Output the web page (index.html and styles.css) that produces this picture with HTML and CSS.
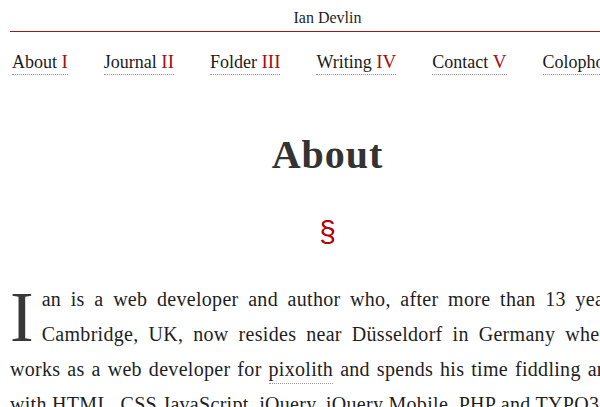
FILE: index.html
```html
<!DOCTYPE html>
<html lang="en">
<head>
<meta charset="utf-8">
<title>About – Ian Devlin</title>
<link rel="stylesheet" href="styles.css">
</head>
<body>
<div class="page">
  <header class="site-header">
    <a class="site-title" href="#">Ian Devlin</a>
  </header>
  <nav class="main-nav">
    <ul>
      <li><a href="#">About <span class="num">I</span></a></li>
      <li><a href="#">Journal <span class="num">II</span></a></li>
      <li><a href="#">Folder <span class="num">III</span></a></li>
      <li><a href="#">Writing <span class="num">IV</span></a></li>
      <li><a href="#">Contact <span class="num">V</span></a></li>
      <li><a href="#">Colophon <span class="num">VI</span></a></li>
    </ul>
  </nav>
  <main class="content">
    <h1 class="title">About</h1>
    <div class="section-mark">§</div>
    <p class="intro"><span class="dropcap">I</span><span class="line">an is a web developer and author who, after more than 13 years in</span><span class="line">Cambridge, UK, now resides near Düsseldorf in Germany where he</span><span class="line">works as a web developer for <a class="inline-link" href="#">pixolith</a> and spends his time fiddling around</span>with HTML, CSS JavaScript, jQuery, jQuery Mobile, PHP and TYPO3.</p>
  </main>
</div>
</body>
</html>
```

FILE: styles.css
```css
html {
  overflow: hidden;
}

body {
  margin: 0;
  background: #fff;
  color: #1e1e1e;
  font-family: "Liberation Serif", "Times New Roman", serif;
}

a {
  color: inherit;
  text-decoration: none;
}

.page {
  width: 635px;
  margin-left: 10px;
}

.site-header {
  padding: 8px 0 3px;
  text-align: center;
  border-bottom: 1px solid #9b1a1a;
  font-size: 16px;
  line-height: 20px;
}

.main-nav ul {
  list-style: none;
  margin: 18px 0 0;
  padding: 0 0 0 2px;
  display: flex;
  gap: 36px;
  white-space: nowrap;
}

.main-nav a {
  display: block;
  font-size: 18px;
  line-height: 24px;
  border-bottom: 1px dotted #9a9a9a;
  color: #1a1a1a;
}

.num {
  color: #a80d0d;
  font-size: 19px;
}

.content {
  padding-top: 56px;
}

.title {
  margin: 0;
  text-align: center;
  font-size: 40px;
  line-height: 48px;
  font-weight: bold;
  letter-spacing: 1px;
  color: #333;
}

.section-mark {
  margin-top: 36px;
  text-align: center;
  font-family: "Liberation Sans", Arial, sans-serif;
  font-size: 30px;
  line-height: 34px;
  color: #b00000;
}

.intro {
  margin: 33px 0 0;
  font-size: 20px;
  line-height: 35px;
  letter-spacing: 0.3px;
  color: #1e1e1e;
}

.dropcap {
  float: left;
  font-size: 71px;
  line-height: 56px;
  margin-top: 7px;
  padding-right: 8px;
  letter-spacing: 0;
  color: #383838;
}

.line {
  display: block;
  text-align: justify;
  text-align-last: justify;
}

.inline-link {
  padding-bottom: 3px;
  border-bottom: 1px dotted #9a9a9a;
}
```
